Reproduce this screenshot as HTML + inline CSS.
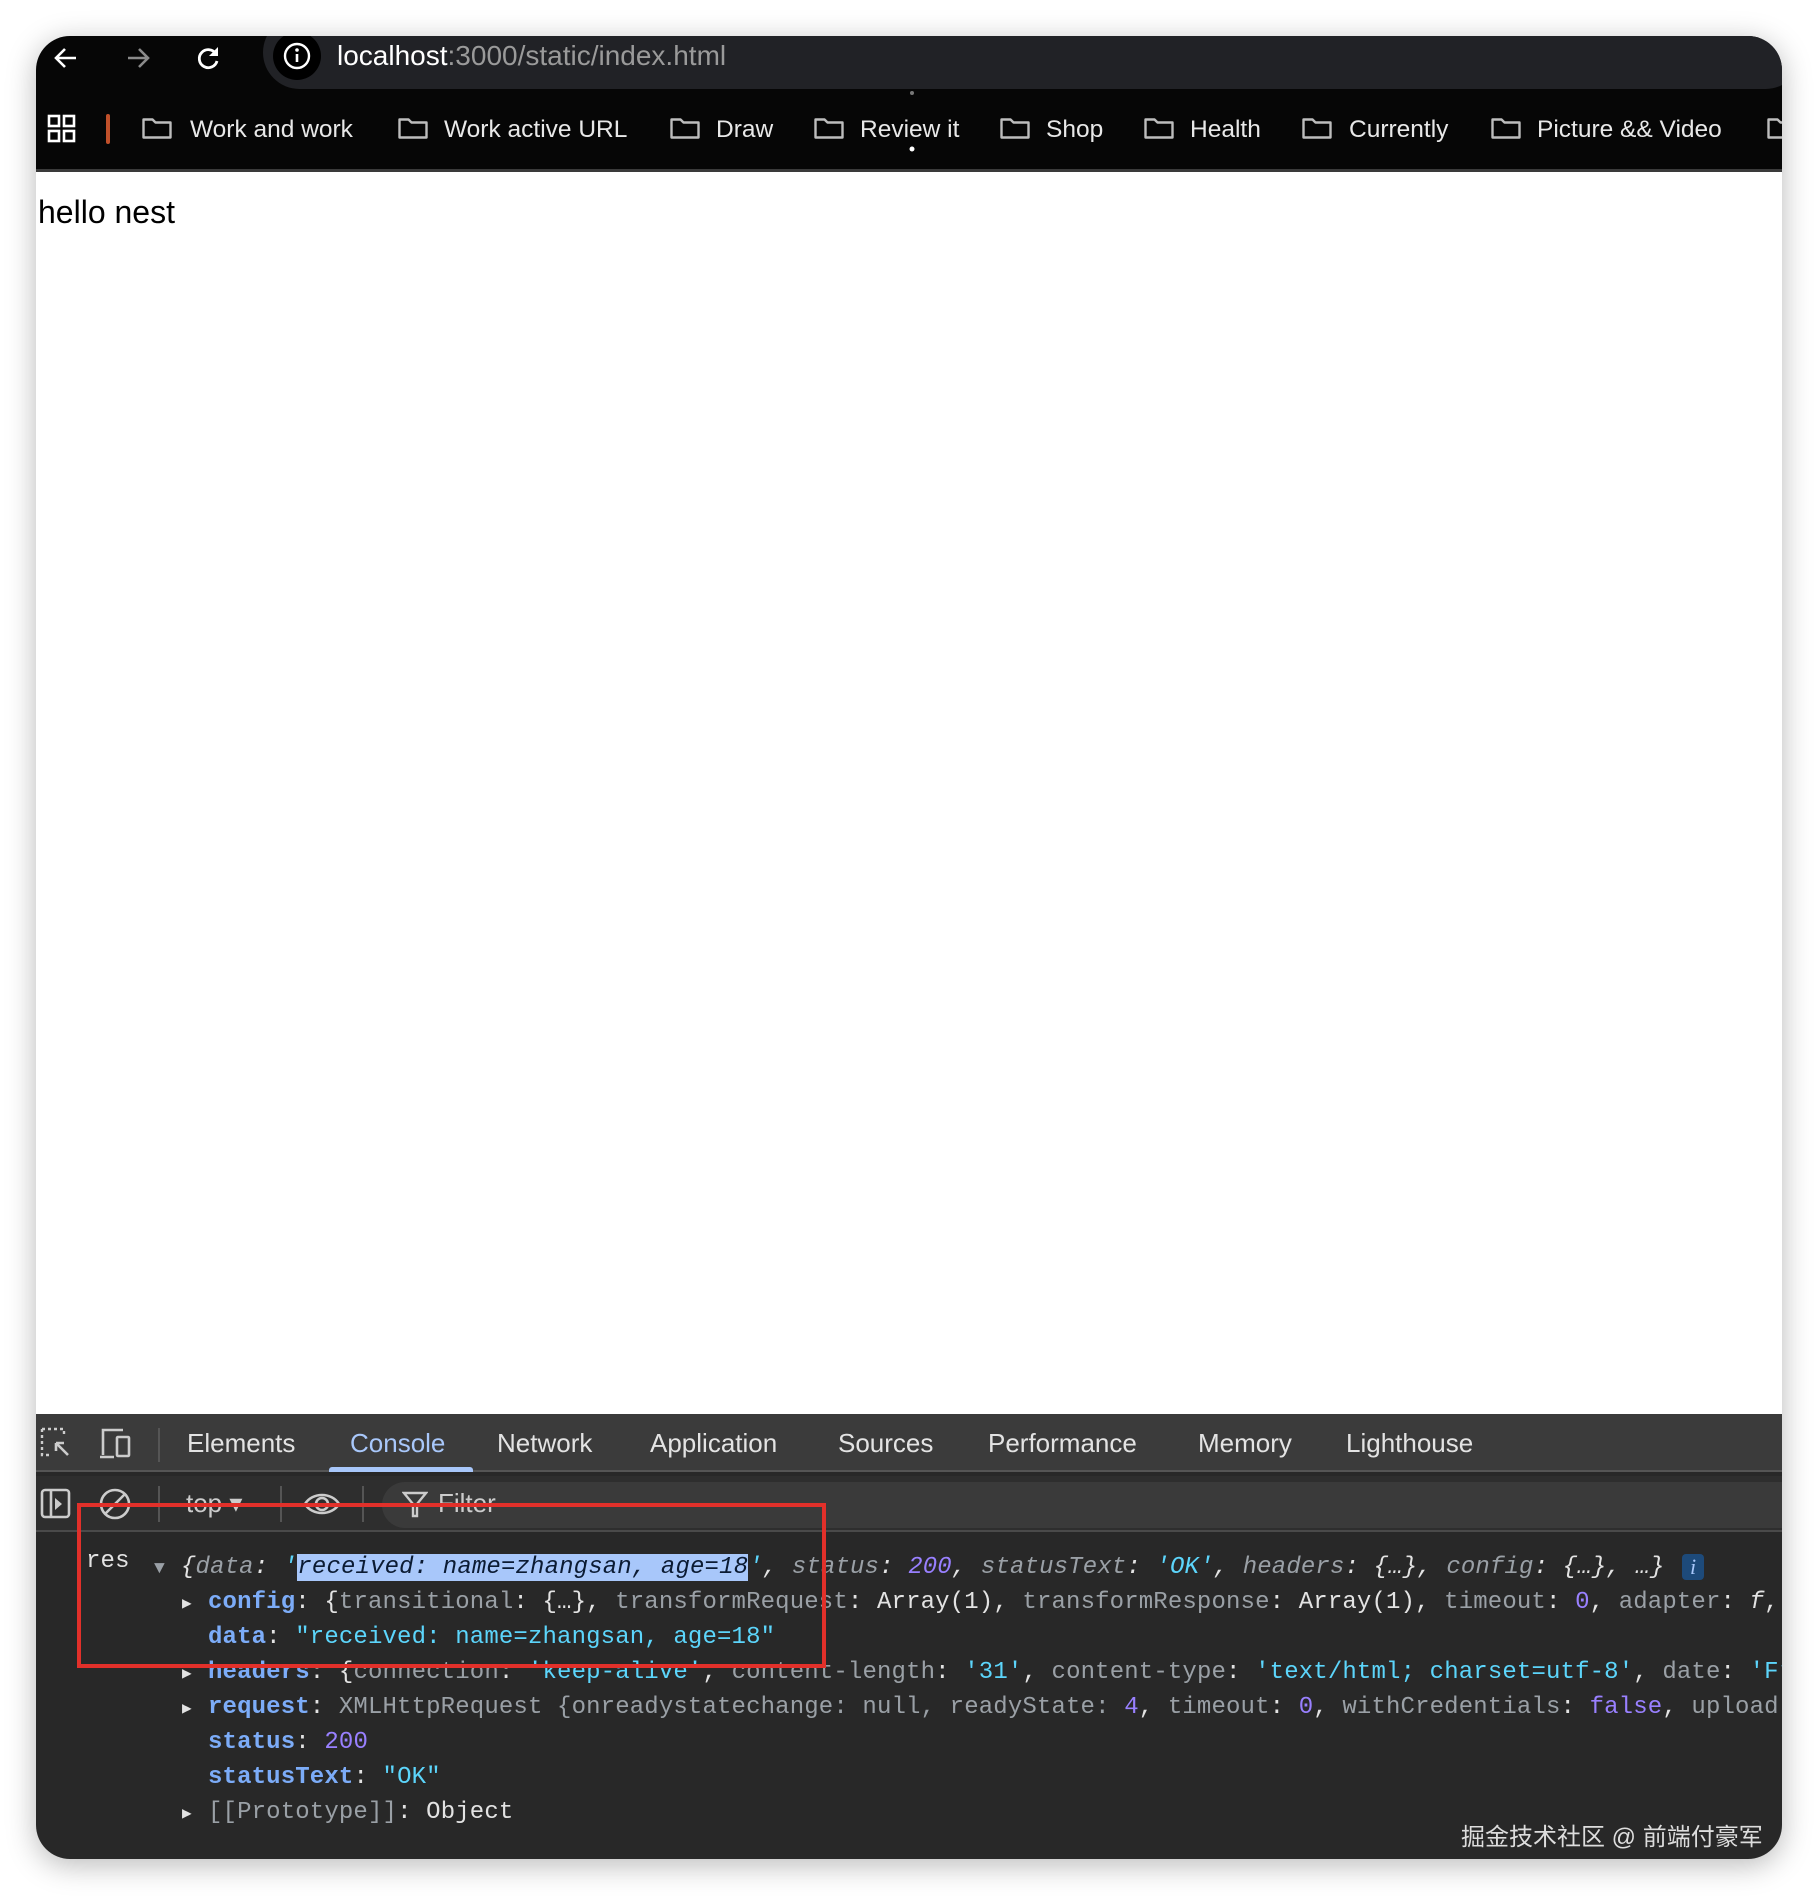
<!DOCTYPE html>
<html><head><meta charset="utf-8"><style>
*{margin:0;padding:0;box-sizing:border-box}
body{width:1818px;height:1896px;background:#fff;position:relative;overflow:hidden;font-family:"Liberation Sans",sans-serif}
.win{position:absolute;left:36px;top:36px;width:1746px;height:1823px;border-radius:34px;overflow:hidden;background:#fff;box-shadow:0 6px 30px rgba(0,0,0,.28)}
.top{position:absolute;left:0;top:0;width:100%;height:136px;background:#060606;border-bottom:3px solid #3a3a3a}
.pill{position:absolute;left:227px;top:-20px;right:-20px;height:73px;background:#212226;border-radius:37px}
.abs{position:absolute}
.bm{position:absolute;top:77px;color:#e8e8e8;font-size:24.5px;line-height:34px;white-space:nowrap}
.dt{position:absolute;left:0;top:1378px;width:100%;height:445px;background:#282828}
.tabs{position:absolute;left:0;top:0;width:100%;height:58px;background:#3b3b3b;border-bottom:2px solid #555}
.tab{position:absolute;top:14px;color:#e3e3e3;font-size:26px;line-height:30px}
.tb{position:absolute;left:0;top:62px;width:100%;height:56px;background:#2e2e2e;border-bottom:2px solid #4a4a4a}
.mono{font-family:"Liberation Mono",monospace;font-size:24px;letter-spacing:.14px;white-space:nowrap;line-height:35px;position:absolute}
.k{color:#7cacf8;font-weight:bold}
.g{color:#9aa0a6}
.w{color:#e3e3e3}
.s{color:#5cd5fb}
.n{color:#9980ff}
.it{font-style:italic}
</style></head><body>
<div class="win">
 <div class="top">
  <div class="pill"></div>
  <svg class="abs" style="left:14px;top:6px" width="32" height="32" viewBox="0 0 32 32"><path d="M26 16H7M15 7l-9 9 9 9" stroke="#fff" stroke-width="2.6" fill="none"/></svg>
  <svg class="abs" style="left:86px;top:6px" width="32" height="32" viewBox="0 0 32 32"><path d="M6 16h19M17 7l9 9-9 9" stroke="#8a8a8a" stroke-width="2.6" fill="none"/></svg>
  <svg class="abs" style="left:156px;top:6px" width="32" height="32" viewBox="0 0 32 32"><path d="M24 12a9 9 0 1 0 1 7" stroke="#fff" stroke-width="2.8" fill="none"/><path d="M26 5v9h-9z" fill="#fff"/></svg>
  <div class="abs" style="left:237px;top:-4px;width:48px;height:48px;border-radius:50%;background:#000"></div>
  <svg class="abs" style="left:246px;top:5px" width="30" height="30" viewBox="0 0 30 30"><circle cx="15" cy="15" r="12" stroke="#fff" stroke-width="2.4" fill="none"/><path d="M15 13v8" stroke="#fff" stroke-width="2.6"/><circle cx="15" cy="9" r="1.8" fill="#fff"/></svg>
  <div class="abs" style="left:301px;top:3px;font-size:28px;line-height:34px;color:#9a9a9a;white-space:nowrap"><span style="color:#fff">localhost</span>:3000/static/index.html</div>
  <svg class="abs" style="left:11px;top:78px" width="30" height="30" viewBox="0 0 30 30"><g fill="none" stroke="#fff" stroke-width="2.6"><rect x="2" y="2" width="10" height="10"/><rect x="17" y="2" width="10" height="10"/><rect x="2" y="17" width="10" height="10"/><rect x="17" y="17" width="10" height="10"/></g></svg>
  <div class="abs" style="left:70px;top:78px;width:4px;height:30px;background:#c0502a;border-radius:2px"></div>
  <div class="bm" style="left:154px">Work and work</div>
  <div class="bm" style="left:408px">Work active URL</div>
  <div class="bm" style="left:680px">Draw</div>
  <div class="bm" style="left:824px">Review it</div>
  <div class="bm" style="left:1010px">Shop</div>
  <div class="bm" style="left:1154px">Health</div>
  <div class="bm" style="left:1313px">Currently</div>
  <div class="bm" style="left:1501px">Picture &amp;&amp; Video</div>
  <svg class="abs" style="left:0;top:0" width="1746" height="136">
   <defs><path id="f" d="M1.5 3.5h9l3 3h15v15h-27z" fill="none" stroke="#bdbdbd" stroke-width="2.4" stroke-linejoin="round"/></defs>
   <use href="#f" x="106" y="80"/><use href="#f" x="362" y="80"/><use href="#f" x="634" y="80"/><use href="#f" x="778" y="80"/><use href="#f" x="964" y="80"/><use href="#f" x="1108" y="80"/><use href="#f" x="1266" y="80"/><use href="#f" x="1455" y="80"/><use href="#f" x="1731" y="80"/>
   <circle cx="876" cy="57" r="2" fill="#777"/><circle cx="876" cy="113" r="2.5" fill="#fff"/>
  </svg>
 </div>
 <div class="abs" style="left:2px;top:156px;font-size:32px;line-height:40px;color:#000">hello nest</div>
 <div class="dt">
  <div class="tabs">
   <svg class="abs" style="left:4px;top:13px" width="34" height="34" viewBox="0 0 34 34"><path d="M2 2h22v6M2 2v26h8" stroke="#ccc" stroke-width="2.4" stroke-dasharray="3 3" fill="none"/><path d="M16 16l12 12M16 16h8M16 16v8" stroke="#ccc" stroke-width="2.6" fill="none"/></svg>
   <svg class="abs" style="left:62px;top:13px" width="40" height="34" viewBox="0 0 40 34"><path d="M5 28V3h20M2 30h14" stroke="#ccc" stroke-width="2.6" fill="none"/><rect x="19" y="10" width="12" height="19" rx="1" stroke="#ccc" stroke-width="2.6" fill="none"/></svg>
   <div class="abs" style="left:122px;top:14px;width:2px;height:34px;background:#555"></div>
   <div class="tab" style="left:151px">Elements</div>
   <div class="tab" style="left:314px;color:#a8c7fa">Console</div>
   <div class="abs" style="left:293px;top:53px;width:144px;height:5px;background:#a8c7fa;border-radius:3px 3px 0 0"></div>
   <div class="tab" style="left:461px">Network</div>
   <div class="tab" style="left:614px">Application</div>
   <div class="tab" style="left:802px">Sources</div>
   <div class="tab" style="left:952px">Performance</div>
   <div class="tab" style="left:1162px">Memory</div>
   <div class="tab" style="left:1310px">Lighthouse</div>
  </div>
  <div class="tb">
   <svg class="abs" style="left:4px;top:12px" width="32" height="32" viewBox="0 0 32 32"><rect x="2" y="2" width="27" height="27" rx="3" stroke="#ccc" stroke-width="2.6" fill="none"/><path d="M11 2v27" stroke="#ccc" stroke-width="2.6"/><path d="M15 10l7 6-7 6z" fill="#ccc"/></svg>
   <svg class="abs" style="left:62px;top:11px" width="34" height="34" viewBox="0 0 34 34"><circle cx="17" cy="17" r="14" stroke="#ccc" stroke-width="2.6" fill="none"/><path d="M7 27L27 7" stroke="#ccc" stroke-width="2.6"/></svg>
   <div class="abs" style="left:122px;top:10px;width:2px;height:36px;background:#555"></div>
   <div class="abs" style="left:150px;top:12px;font-size:26px;color:#ccc">top ▾</div>
   <div class="abs" style="left:244px;top:10px;width:2px;height:36px;background:#555"></div>
   <svg class="abs" style="left:266px;top:12px" width="40" height="32" viewBox="0 0 40 32"><path d="M3 16C10 4 30 4 37 16C30 28 10 28 3 16z" stroke="#ccc" stroke-width="2.6" fill="none"/><circle cx="20" cy="16" r="6" stroke="#ccc" stroke-width="2.6" fill="none"/></svg>
   <div class="abs" style="left:326px;top:10px;width:2px;height:36px;background:#555"></div>
   <div class="abs" style="left:346px;top:6px;right:0;height:46px;background:#3a3a3a;border-radius:23px 0 0 23px"></div>
   <svg class="abs" style="left:366px;top:15px" width="26" height="28" viewBox="0 0 26 28"><path d="M2 2h22l-9 11v12h-4V13z" stroke="#ccc" stroke-width="2.4" fill="none"/></svg>
   <div class="abs" style="left:402px;top:12px;font-size:26px;color:#ccc">Filter</div>
  </div>
  <div class="mono" style="left:50px;top:130px;color:#e3e3e3">res</div>
  <div class="mono" style="left:118px;top:136px"><span class="g" style="font-size:18px">▼</span></div>
  <div class="mono it" style="left:145px;top:136px"><span class="w">{</span><span class="g">data</span><span class="w">: </span><span class="s">'</span><span style="background:#a8c7fa;color:#0b1b33">received: name=zhangsan, age=18</span><span class="s">'</span><span class="w">, </span><span class="g">status</span><span class="w">: </span><span class="n">200</span><span class="w">, </span><span class="g">statusText</span><span class="w">: </span><span class="s">'OK'</span><span class="w">, </span><span class="g">headers</span><span class="w">: {…}, </span><span class="g">config</span><span class="w">: {…}, …}</span></div>
  <div class="abs" style="left:1646px;top:140px;width:22px;height:26px;background:#1d4a7a;border-radius:4px;color:#a8c7fa;font-style:italic;font-family:'Liberation Serif',serif;font-size:22px;text-align:center;line-height:26px">i</div>
  <div class="mono" style="left:146px;top:171px"><span class="w" style="font-size:16px">▶</span></div>
  <div class="mono" style="left:172px;top:171px"><span class="k">config</span><span class="w">: {</span><span class="g">transitional</span><span class="w">: {…}, </span><span class="g">transformRequest</span><span class="w">: Array(1), </span><span class="g">transformResponse</span><span class="w">: Array(1), </span><span class="g">timeout</span><span class="w">: </span><span class="n">0</span><span class="w">, </span><span class="g">adapter</span><span class="w">: <i>f</i>,</span></div>
  <div class="mono" style="left:172px;top:206px"><span class="k">data</span><span class="w">: </span><span class="s">"received: name=zhangsan, age=18"</span></div>
  <div class="mono" style="left:146px;top:241px"><span class="w" style="font-size:16px">▶</span></div>
  <div class="mono" style="left:172px;top:241px"><span class="k">headers</span><span class="w">: {</span><span class="g">connection</span><span class="w">: </span><span class="s">'keep-alive'</span><span class="w">, </span><span class="g">content-length</span><span class="w">: </span><span class="s">'31'</span><span class="w">, </span><span class="g">content-type</span><span class="w">: </span><span class="s">'text/html; charset=utf-8'</span><span class="w">, </span><span class="g">date</span><span class="w">: </span><span class="s">'Fri</span></div>
  <div class="mono" style="left:146px;top:276px"><span class="w" style="font-size:16px">▶</span></div>
  <div class="mono" style="left:172px;top:276px"><span class="k">request</span><span class="w">: </span><span class="g">XMLHttpRequest {onreadystatechange: null, readyState: </span><span class="n">4</span><span class="w">, </span><span class="g">timeout</span><span class="w">: </span><span class="n">0</span><span class="w">, </span><span class="g">withCredentials</span><span class="w">: </span><span class="n">false</span><span class="w">, </span><span class="g">upload</span></div>
  <div class="mono" style="left:172px;top:311px"><span class="k">status</span><span class="w">: </span><span class="n">200</span></div>
  <div class="mono" style="left:172px;top:346px"><span class="k">statusText</span><span class="w">: </span><span class="s">"OK"</span></div>
  <div class="mono" style="left:146px;top:381px"><span class="w" style="font-size:16px">▶</span></div>
  <div class="mono" style="left:172px;top:381px"><span class="g">[[Prototype]]</span><span class="w">: Object</span></div>
  <div class="abs" style="left:1425px;top:403px;font-family:'Liberation Sans','Noto Sans CJK SC',sans-serif;font-size:24px;color:#ddd;white-space:nowrap">掘金技术社区 @ 前端付豪军</div>
 </div>
</div>
<div class="abs" style="left:77px;top:1503px;width:749px;height:165px;border:4px solid #e2302a"></div>
</body></html>
